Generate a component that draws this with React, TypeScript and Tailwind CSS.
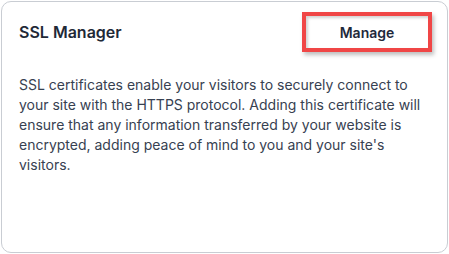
export default function App() {
  return (
    <div className="h-[254px] w-[449px] bg-white p-px font-['Inter',sans-serif]">
      <div className="flex h-[252px] flex-col rounded-[10px] border border-[#c9cdd3] bg-white px-[17px]">
        <div className="flex items-center justify-between pt-[10px]">
          <h2 className="text-[16px] font-semibold leading-6 text-[#1f2937]">SSL Manager</h2>
          <button className="mr-[-2px] flex h-[40px] w-[130px] items-center justify-center border-[4px] border-[#f04646] bg-white text-[14px] font-semibold text-[#1e293b] shadow-[2px_3px_4px_rgba(0,0,0,0.25),inset_2px_2px_3px_rgba(0,0,0,0.18)]">
            Manage
          </button>
        </div>
        <p className="mt-[23px] text-[14px] leading-5 text-[#374151]">
          SSL certificates enable your visitors to securely connect to your site with the HTTPS protocol. Adding this
          certificate will ensure that any information transferred by your website is encrypted, adding peace of mind
          to you and your site's visitors.
        </p>
      </div>
    </div>
  );
}
